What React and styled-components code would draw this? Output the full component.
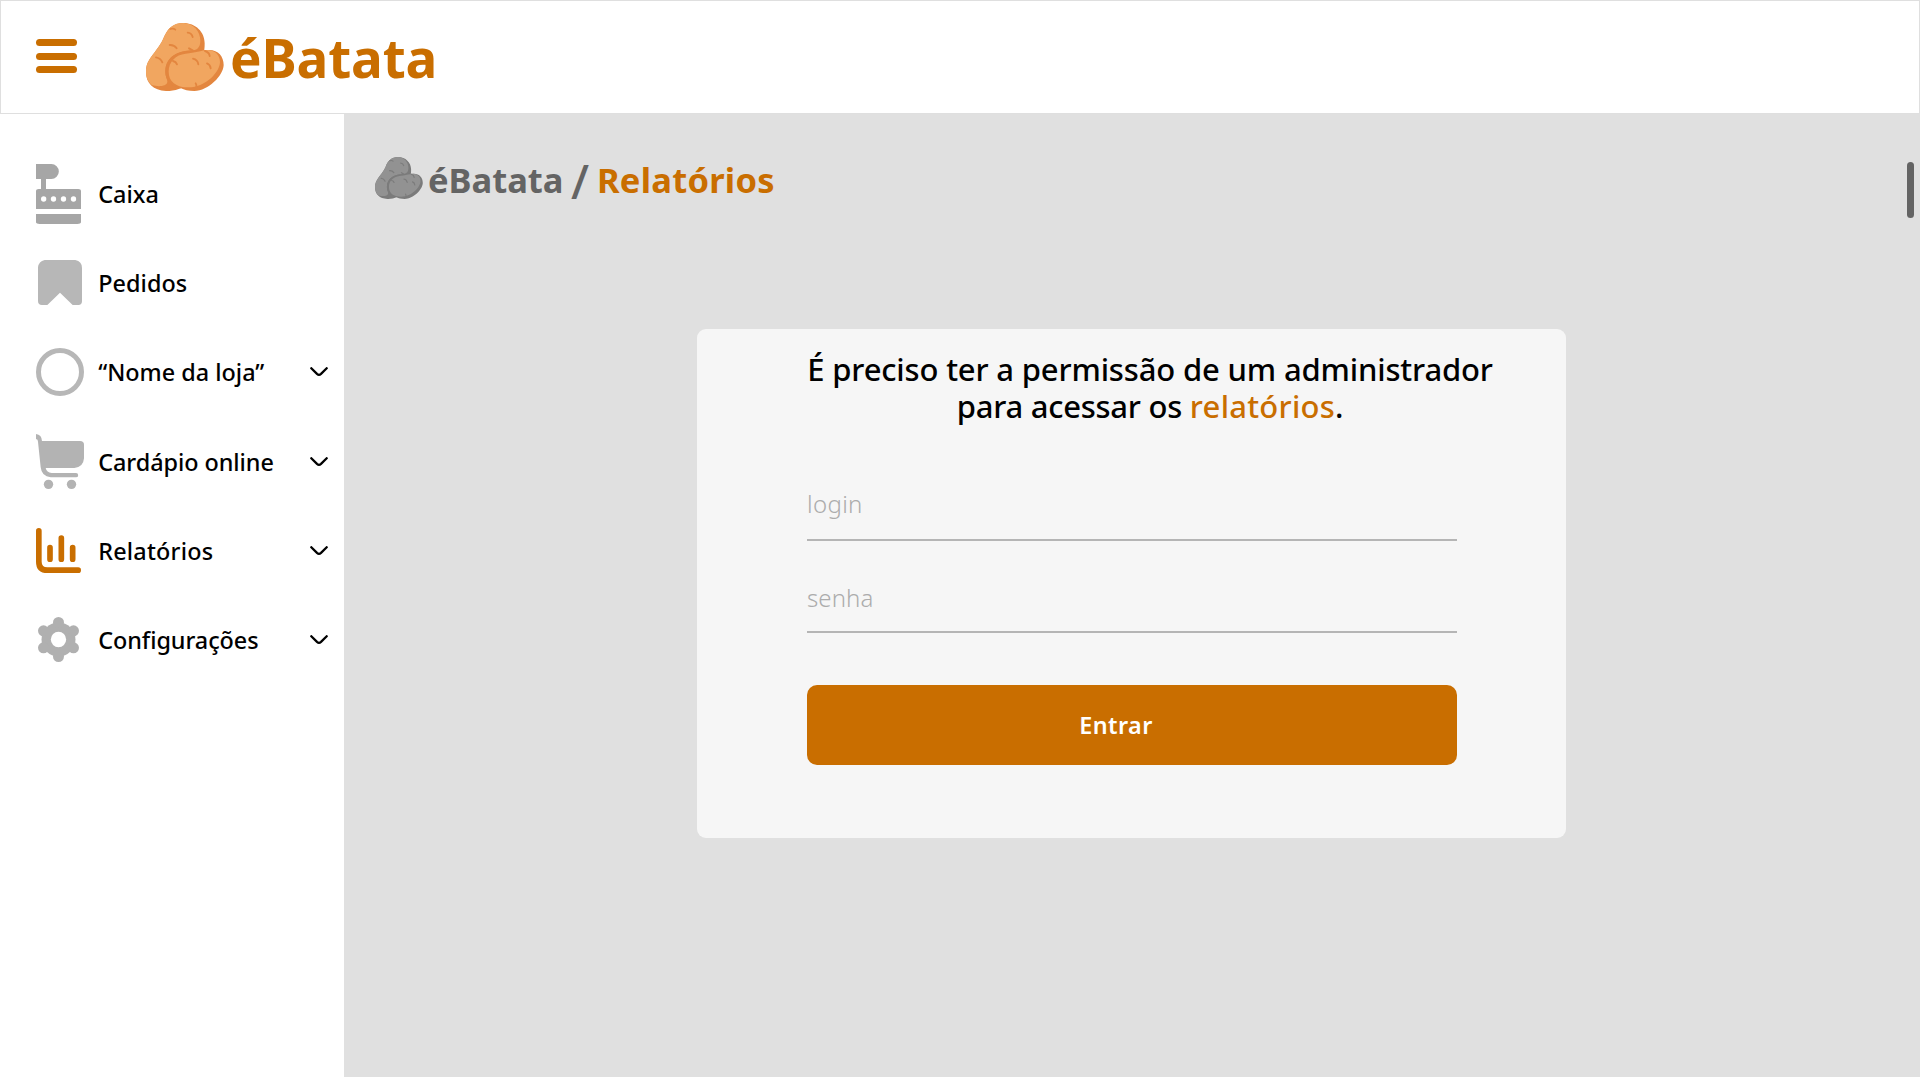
import React from 'react';
import styled, { createGlobalStyle } from 'styled-components';

const ORANGE = '#c96e00';

const GlobalStyle = createGlobalStyle`
  * { box-sizing: border-box; }
  body {
    margin: 0;
    background: #fff;
    font-family: "Noto Sans", "Open Sans", sans-serif;
    color: #000;
    overflow: hidden;
  }
`;

const Page = styled.div`
  display: flex;
  flex-direction: column;
  width: 1920px;
  height: 1080px;
`;

const Header = styled.header`
  display: flex;
  align-items: center;
  height: 114px;
  flex: none;
  padding-left: 35px;
  border: 1px solid #dfdfdf;
`;

const MenuButton = styled.button`
  display: flex;
  flex-direction: column;
  justify-content: space-between;
  width: 41px;
  height: 34px;
  margin: 0 69px 2px 0;
  padding: 0;
  border: 0;
  background: none;
`;

const MenuBar = styled.span`
  height: 7px;
  border-radius: 3.5px;
  background: ${ORANGE};
`;

const Brand = styled.div`
  display: flex;
  align-items: center;
`;

const BrandName = styled.span`
  margin-left: 6px;
  padding-top: 2px;
  font-size: 53px;
  font-weight: 700;
  line-height: 60px;
  letter-spacing: -0.15px;
  color: ${ORANGE};
`;

const Body = styled.div`
  display: flex;
  height: 963px;
`;

const Sidebar = styled.nav`
  display: flex;
  flex-direction: column;
  width: 344px;
  flex: none;
  padding: 34.7px 16px 0 36px;
`;

const NavItem = styled.a`
  display: flex;
  align-items: center;
  height: 89.3px;
  padding-top: ${(p) => p.$drop || 0}px;
`;

const IconSlot = styled.span`
  display: flex;
  width: 48px;
  margin-right: 14.2px;
  padding-left: ${(p) => p.$indent || 0}px;
`;

const NavLabel = styled.span`
  flex: 1;
  white-space: nowrap;
  font-size: 23.4px;
  font-weight: 500;
  line-height: 30px;
  letter-spacing: ${(p) => p.$tracking || 0}px;
`;

const Main = styled.main`
  position: relative;
  flex: 1;
  padding-top: 42px;
  background: #e0e0e0;
`;

const ScrollThumb = styled.div`
  position: absolute;
  top: 48px;
  right: 6px;
  width: 7px;
  height: 56px;
  border-radius: 3.5px;
  background: #646464;
`;

const Breadcrumb = styled.div`
  display: flex;
  align-items: center;
  height: 48px;
  padding-left: 31px;
  font-size: 34.5px;
  font-weight: 700;
  line-height: 48px;
`;

const CrumbIcon = styled.span`
  display: flex;
  padding-bottom: 4px;
`;

const Crumb = styled.span`
  color: ${(p) => (p.$current ? ORANGE : '#646464')};
  margin-left: ${(p) => p.$gap}px;
  letter-spacing: ${(p) => (p.$current ? 0.25 : 0)}px;
`;

const Separator = styled.span`
  width: 17px;
  margin-left: 8px;
  padding-top: 2px;
  display: flex;
  justify-content: center;
  font-size: 47px;
  font-weight: 500;
  color: #646464;
`;

const Card = styled.section`
  display: flex;
  flex-direction: column;
  width: 869px;
  height: 509px;
  margin: 125px 0 0 353px;
  padding: 22px 0 0 110px;
  border-radius: 9px;
  background: #f6f6f6;
`;

const Title = styled.h1`
  width: 686px;
  margin: 0 0 58px;
  text-align: center;
  white-space: nowrap;
  font-size: 31px;
  font-weight: 500;
  line-height: 37px;
  letter-spacing: -0.16px;
`;

const TitleEnd = styled.span`
  letter-spacing: -0.25px;
`;

const Highlight = styled.span`
  color: ${ORANGE};
  letter-spacing: 0.25px;
`;

const Field = styled.label`
  display: flex;
  width: 650px;
  margin-bottom: ${(p) => p.$after}px;
  padding-bottom: ${(p) => p.$drop}px;
  border-bottom: 2px solid #b5b5b5;
`;

const Input = styled.input`
  width: 100%;
  height: 41px;
  padding: 0;
  border: 0;
  outline: 0;
  background: none;
  font: 300 24px "Noto Sans", "Open Sans", sans-serif;
  letter-spacing: ${(p) => p.$tracking}px;
  &::placeholder { color: #acacac; opacity: 1; }
`;

const Submit = styled.button`
  width: 650px;
  height: 80px;
  padding: 0 32px 0 0;
  border: 0;
  border-radius: 10px;
  background: ${ORANGE};
  color: #fff;
  font: 600 23.4px "Noto Sans", "Open Sans", sans-serif;
  letter-spacing: 0.4px;
`;

const Potatoes = ({ width, height, light, dark }) => (
  <svg width={width} height={height} viewBox="48 39 234 204">
    <path fill={dark} d="M160 39C197 39 224 66 224 100C224 115 223 125 219 132L153 235Q135 244 108 243C70 241 48 220 48 186C48 145 78 132 99 88C111 57 128 39 160 39Z" />
    <path fill={light} d="M160 39C190 39 211 64 211 92C211 110 203 119 189 121C145 121 107 140 106 184C106 202 113 208 112 216C110 229 87 231 67 226C55 217 48 203 48 186C48 145 78 132 99 88C111 57 128 39 160 39Z" />
    <path fill={dark} d="M238 120C265 120 281 140 281 165C280 197 235 242 193 243C175 243 162 240 153 235C125 229 105 214 106 183C107 148 132 129 165 124C195 121 212 120 238 120Z" />
    <path fill={light} d="M235 120C257 122 270 136 270 156C270 184 229 232 175 232C138 232 116 215 116 185C116 155 137 134 167 131C196 129 212 121 235 120Z" />
    <g fill="none" stroke={dark} strokeWidth="5.5" strokeLinecap="round">
      <path d="M121 57Q130 54 136 59M173 68Q185 69 188 81M119 105Q132 104 140 115M78 142Q92 144 97 157M177 115L188 121M225 123Q238 127 239 138M189 146Q203 149 205 163M231 160Q241 164 242 175M129 153Q138 155 141 163M197 220Q200 223 199 232" />
    </g>
  </svg>
);

const RegisterIcon = () => (
  <svg width="45" height="60" viewBox="48 42 135 180" fill="#a6a6a6">
    <path d="M48 42H94A22.5 22.5 0 0 1 94 87H78V117H175Q183 117 183 122V177H48V122Q48 117 56 117H63V87H48Z" />
    <path d="M48 192H183V217Q182 222 172 222H59Q49 222 48 217Z" />
    <g fill="#fff">
      <circle cx="71" cy="147" r="8" />
      <circle cx="100.500" cy="147" r="8" />
      <circle cx="130.500" cy="147" r="8" />
      <circle cx="160.500" cy="147" r="8" />
    </g>
  </svg>
);

const BookmarkIcon = () => (
  <svg width="44" height="45" viewBox="54 330 132 135" fill="#b7b7b7">
    <path d="M74 330H166Q186 334 186 354V454Q186 465 175 465H158L120 428L82 465H66Q54 465 54 453V352Q56 334 74 330Z" />
  </svg>
);

const StoreIcon = () => (
  <svg width="48" height="48" viewBox="0 0 48 48">
    <circle cx="24" cy="24" r="21.500" fill="none" stroke="#b7b7b7" strokeWidth="5" />
  </svg>
);

const CartIcon = () => (
  <svg width="48" height="55" viewBox="48 312 144 165" fill="#b3b3b3">
    <path d="M48 312Q65 314 66 333H180Q192 333 192 344V385Q190 412 163 414H77Q80 428 95 429H168A6.500 6.500 0 0 1 168 442H92Q65 440 62 412L54 335Q54 328 48 327Z" />
    <circle cx="85.500" cy="463" r="14" />
    <circle cx="154.500" cy="463" r="14" />
  </svg>
);

const ChartIcon = () => (
  <svg width="45" height="45" viewBox="48 54 135 135" fill="none" stroke={ORANGE} strokeWidth="17" strokeLinecap="round">
    <path d="M56.500 62.500V155Q56.500 180.500 82 180.500H174.500M90 113V147.500M124 84V147.500M158 113V147.500" />
  </svg>
);

const GearIcon = () => (
  <svg width="41" height="45" viewBox="54 321 123 135">
    <g fill="#b0b0b0">
      <circle cx="115.500" cy="388.500" r="51" />
      <circle cx="115.500" cy="337.500" r="16.500" />
      <circle cx="160.500" cy="362.500" r="16.500" />
      <circle cx="160.500" cy="413.500" r="16.500" />
      <circle cx="115.500" cy="439.500" r="16.500" />
      <circle cx="70.500" cy="413.500" r="16.500" />
      <circle cx="70.500" cy="362.500" r="16.500" />
    </g>
    <circle cx="115.500" cy="388.500" r="23" fill="#fff" />
  </svg>
);

const Chevron = () => (
  <svg width="18" height="10" viewBox="0 0 18 10" fill="none" stroke="#000" strokeWidth="2.300" strokeLinecap="round">
    <path d="M1.300 1.200L7 6.900Q9 8.800 11 6.900L16.700 1.200" />
  </svg>
);

const items = [
  { label: 'Caixa', icon: <RegisterIcon />, drop: 1.2 },
  { label: 'Pedidos', icon: <BookmarkIcon />, indent: 2, tracking: 0.05 },
  { label: '“Nome da loja”', icon: <StoreIcon />, tracking: 0, expandable: true },
  { label: 'Cardápio online', icon: <CartIcon />, tracking: -0.05, drop: 1.2, expandable: true },
  { label: 'Relatórios', icon: <ChartIcon />, tracking: 0.2, expandable: true },
  { label: 'Configurações', icon: <GearIcon />, indent: 2, tracking: -0.05, expandable: true },
];

export default function App() {
  return (
    <Page>
      <GlobalStyle />
      <Header>
        <MenuButton aria-label="Menu">
          <MenuBar />
          <MenuBar />
          <MenuBar />
        </MenuButton>
        <Brand>
          <Potatoes width={78} height={68} light="#f1a660" dark="#e3863f" />
          <BrandName>éBatata</BrandName>
        </Brand>
      </Header>
      <Body>
        <Sidebar>
          {items.map((item) => (
            <NavItem key={item.label} $drop={item.drop}>
              <IconSlot $indent={item.indent}>{item.icon}</IconSlot>
              <NavLabel $tracking={item.tracking}>{item.label}</NavLabel>
              {item.expandable && <Chevron />}
            </NavItem>
          ))}
        </Sidebar>
        <Main>
          <Breadcrumb>
            <CrumbIcon>
              <Potatoes width={48} height={42} light="#929292" dark="#7b7b7b" />
            </CrumbIcon>
            <Crumb $gap={5}>éBatata</Crumb>
            <Separator>/</Separator>
            <Crumb $current $gap={8.5}>Relatórios</Crumb>
          </Breadcrumb>
          <Card>
            <Title>
              É preciso ter a permissão de um administrador
              <br />
              <TitleEnd>
                para acessar os <Highlight>relatórios</Highlight>.
              </TitleEnd>
            </Title>
            <Field $drop={15} $after={36}>
              <Input placeholder="login" $tracking={0.35} />
            </Field>
            <Field $drop={13} $after={52}>
              <Input placeholder="senha" type="password" $tracking={0.1} />
            </Field>
            <Submit>Entrar</Submit>
          </Card>
          <ScrollThumb />
        </Main>
      </Body>
    </Page>
  );
}
